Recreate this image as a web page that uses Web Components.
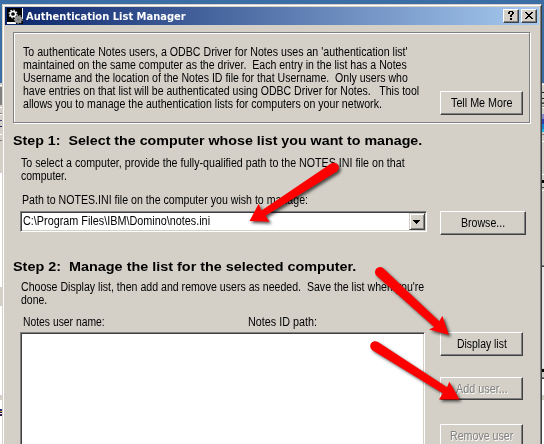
<!DOCTYPE html>
<html lang="en"><head><meta charset="utf-8"><title>Authentication List Manager</title>
<style>
html,body{margin:0;height:444px;overflow:hidden}
body{background:#3a6ea5;font:12.5px/13px "Liberation Sans",sans-serif;color:#000}
</style></head><body>
<desktop-scene></desktop-scene>
<script>
const define = (name, html, init) => customElements.define(name, class extends HTMLElement {
  connectedCallback() {
    if (this.shadowRoot) return;
    this.attachShadow({mode: 'open'}).innerHTML = html;
    if (init) init(this, this.shadowRoot);
  }
});

/* One line of text, condensed or widened to the width in its "w" attribute. */
define('fit-line', `<style>
:host{display:block;white-space:pre;height:13px}
span{display:inline-block;transform-origin:0 50%}
</style><span><slot></slot></span>`, (el, root) => {
  const s = root.querySelector('span');
  el.style.width = el.getAttribute('w') + 'px';
  s.style.transform = `scaleX(${el.getAttribute('w') / s.offsetWidth})`;
});

define('push-button', `<style>
:host{display:flex;box-sizing:border-box;width:83px;height:24px;justify-content:center;align-items:flex-start;padding-top:5px;
background:#d4d0c8;border:1px solid;border-color:#fff #404040 #404040 #fff;box-shadow:inset -1px -1px #808080}
:host([disabled]){color:#808080;text-shadow:1px 1px #fff}
</style><slot></slot>`);

define('caption-button', `<style>
:host{display:flex;box-sizing:border-box;width:16px;height:14px;background:#d4d0c8;border:1px solid;border-color:#fff #404040 #404040 #fff;box-shadow:inset -1px -1px #808080}
svg{display:block;width:14px;height:12px}
</style><svg viewBox="0 0 14 12"><path fill="#000"/></svg>`, (el, root) => {
  root.querySelector('path').setAttribute('d', el.getAttribute('glyph'));
});

define('title-bar', `<style>
:host{display:flex;align-items:center;height:18px;padding:0 2px;box-sizing:border-box;background:linear-gradient(90deg,#0a246a,#a6caf0);color:#fff;font:bold 11px/13px "DejaVu Sans",sans-serif}
.icon{width:16px;height:16px;margin-right:3px}
.gap{flex:1}
caption-button+caption-button{margin-left:2px}
</style>
<svg class="icon" viewBox="0 0 16 16"><path fill="#000" d="M0 0h16v16H0z"/><path fill="#fff" d="M15 0h1v11h-1zM0 14h9v2H0z"/>
<circle cx="6" cy="6" r="2.6" fill="none" stroke="#fff" stroke-width="1.5"/><circle cx="6" cy="6" r="3.9" fill="none" stroke="#e8eef8" stroke-width="1.1" stroke-dasharray="1.5 1.56"/>
<circle cx="11.3" cy="11.4" r="3.5" fill="#999"/><circle cx="11.3" cy="11.4" r="3.9" fill="none" stroke="#a4a4a4" stroke-width="1.1" stroke-dasharray="1.5 1.2"/><circle cx="11.3" cy="11.4" r="1.2" fill="#777"/></svg>
<fit-line w="160">Authentication List Manager</fit-line><span class="gap"></span>
<caption-button glyph="M5 1h4v1H5zM4 2h2v2H4zM8 2h2v2H8zM7 4h2v1H7zM6 5h2v2H6zM6 8h2v2H6z"></caption-button>
<caption-button glyph="M3 2h2v1H3zM9 2h2v1H9zM4 3h2v1H4zM8 3h2v1H8zM5 4h4v1H5zM6 5h2v1H6zM5 6h4v1H5zM4 7h2v1H4zM8 7h2v1H8zM3 8h2v1H3zM9 8h2v1H9z"></caption-button>`);

define('step-heading', `<style>:host{display:block;height:16px;font:bold 13.7px/16px "Liberation Sans",sans-serif}</style><slot></slot>`);

define('intro-box', `<style>
:host{display:flex;justify-content:space-between;align-items:flex-end;box-sizing:border-box;height:91px;border:1px solid #808080;box-shadow:1px 1px #fff,inset 1px 1px #fff;padding:0 6px 7px 9px}
.text{align-self:flex-start;padding-top:13px}
</style><div class="text">
<fit-line w="385">To authenticate Notes users, a ODBC Driver for Notes uses an 'authentication list'</fit-line>
<fit-line w="384">maintained on the same computer as the driver.  Each entry in the list has a Notes</fit-line>
<fit-line w="385">Username and the location of the Notes ID file for that Username.  Only users who</fit-line>
<fit-line w="396">have entries on that list will be authenticated using ODBC Driver for Notes.   This tool</fit-line>
<fit-line w="359">allows you to manage the authentication lists for computers on your network.</fit-line>
</div><push-button><fit-line w="62">Tell Me More</fit-line></push-button>`);

define('combo-box', `<style>
:host{display:flex;justify-content:space-between;box-sizing:border-box;width:407px;height:21px;background:#fff;border:1px solid;border-color:#808080 #fff #fff #808080;box-shadow:inset 1px 1px #404040,inset -1px -1px #d4d0c8;padding:1px}
.v{padding:2px 0 0 1px}
.b{box-sizing:border-box;width:16px;height:17px;background:#d4d0c8;border:1px solid;border-color:#d4d0c8 #404040 #404040 #d4d0c8;box-shadow:inset 1px 1px #fff,inset -1px -1px #808080}
svg{display:block}
</style><div class="v"><slot></slot></div><div class="b"><svg width="14" height="15"><path d="M3 6h7v1H3zM4 7h5v1H4zM5 8h3v1H5zM6 9h1v1H6z"/></svg></div>`);

define('list-box', `<style>
:host{display:block;box-sizing:border-box;width:405px;height:130px;background:#fff;border:1px solid;border-color:#808080 #fff #fff #808080;box-shadow:inset 1px 1px #404040,inset -1px 0 #d4d0c8}
</style>`);

define('manager-window', `<style>
:host{display:block;box-sizing:border-box;width:540px;height:460px;background:#d4d0c8;border:1px solid;border-color:#d4d0c8 #404040 #404040 #d4d0c8;box-shadow:inset 1px 1px #fff,inset -1px 0 #808080;padding:2px 2px 0}
.body{padding:7px 0 0 8px}
intro-box{width:517px}
.one{margin-top:10px}
.copy{margin:8px 0 0 8px}
.row{display:flex;align-items:flex-start}
.path{margin:11px 0 0 9px}
.combo{margin:4px 0 0 7px;gap:13px}
.combo push-button{width:86px}
.two{margin-top:24px}
.two+.copy{margin-top:6px}
.labels{margin:9px 0 0 10px;gap:143px}
.list{margin:3px 0 0 7px;gap:15px}
.actions push-button:nth-child(2){height:23px;margin:21px 0 24px}
</style><title-bar></title-bar><div class="body">
<intro-box></intro-box>
<step-heading class="one"><fit-line w="409">Step 1:  Select the computer whose list you want to manage.</fit-line></step-heading>
<div class="copy"><fit-line w="384">To select a computer, provide the fully-qualified path to the NOTES.INI file on that</fit-line><fit-line w="46">computer.</fit-line></div>
<div class="path"><fit-line w="286">Path to NOTES.INI file on the computer you wish to manage:</fit-line></div>
<div class="row combo"><combo-box><fit-line w="187">C:\\Program Files\\IBM\\Domino\\notes.ini</fit-line></combo-box><push-button><fit-line w="44">Browse...</fit-line></push-button></div>
<step-heading class="two"><fit-line w="343">Step 2:  Manage the list for the selected computer.</fit-line></step-heading>
<div class="copy"><fit-line w="403">Choose Display list, then add and remove users as needed.  Save the list when you're</fit-line><fit-line w="26">done.</fit-line></div>
<div class="row labels"><fit-line w="82">Notes user name:</fit-line><fit-line w="69">Notes ID path:</fit-line></div>
<div class="row list"><list-box></list-box><div class="actions"><push-button><fit-line w="50">Display list</fit-line></push-button><push-button disabled><fit-line w="52">Add user...</fit-line></push-button><push-button disabled><fit-line w="63">Remove user</fit-line></push-button></div></div>
</div>`);

/* Slivers of the windows that lie behind the dialog. */
define('back-windows', `<style>:host{display:block;width:2px;height:444px}</style><svg width="2" height="444" style="display:block" shape-rendering="crispEdges"></svg>`, (el, root) => {
  root.querySelector('svg').innerHTML = el.getAttribute('bands').split(' ').map(b => {
    const [y, h, c] = b.split(',');
    return `<rect y="${y}" width="2" height="${h}" fill="${c}"/>`;
  }).join('');
});

define('red-arrows', `<style>:host{position:absolute;left:0;top:0;pointer-events:none}svg{display:block;filter:drop-shadow(2px 2px 1.5px rgba(0,0,0,.65))}</style>
<svg width="544" height="444" fill="#fe0000">
<path d="M249.500 221 258.700 203.700 261.500 210.500 331 163.500A5 5 0 0 1 336.600 171.800L265.500 215.700 269.500 221.800Z"/>
<path d="M449 335 442.300 315.700 439.300 321.300 383.500 268.500A5 5 0 0 0 376.500 275.700L434.200 327 429 329.500Z"/>
<path d="M459.500 399.500 449.300 381.700 447 387.300 378 342A5 5 0 0 0 372.400 350.300L442.700 393.300 439 399.500Z"/></svg>`);

define('desktop-scene', `<style>:host{display:flex;position:relative;width:544px;height:444px;overflow:hidden}manager-window{margin-top:4px}</style>
<back-windows bands="83,2,#d4d0c8 85,1,#fff 86,1,#d4d0c8 87,18,#808080 105,2,#d4d0c8 107,1,#fff 108,5,#d4d0c8 113,1,#808080 114,1,#fff 115,5,#d4d0c8 120,1,#4a4070 121,5,#d4d0c8 126,1,#202060 127,7,#d4d0c8 134,1,#fff 135,5,#d4d0c8 140,1,#808080 141,32,#d4d0c8 173,114,#fff 287,19,#d4d0c8 306,89,#fff 395,5,#d4d0c8 400,9,#fff 409,2,#203070 411,1,#e0a050 412,1,#101040 413,1,#fff 414,2,#301850 416,28,#fff"></back-windows>
<manager-window></manager-window>
<back-windows bands="83,1,#d4d0c8 84,1,#fff 85,7,#d4d0c8 92,1,#202020 93,5,#d4d0c8 98,1,#202020 99,3,#d4d0c8 102,1,#808080 103,1,#404040 104,2,#d4d0c8 106,1,#808080 107,1,#fff 108,6,#d4d0c8 114,5,#8888d0 119,5,#3040b0 124,5,#1685cf 129,3,#20b8ef 132,2,#d4d0c8 134,1,#808080 135,6,#d4d0c8 141,1,#fff 142,32,#d4d0c8 174,1,#fff 175,5,#d4d0c8 180,3,#000 183,4,#d4d0c8 187,1,#404040 188,2,#d4d0c8 190,1,#fff 191,74,#d4d0c8 265,1,#808080 266,1,#404040 267,101,#eae8e4 368,1,#d4d0c8 369,3,#000 372,5,#d4d0c8 377,1,#808080 378,1,#404040 379,16,#fff 395,5,#d4d0c8 400,44,#fff"></back-windows>
<red-arrows></red-arrows>`);
</script></body></html>
